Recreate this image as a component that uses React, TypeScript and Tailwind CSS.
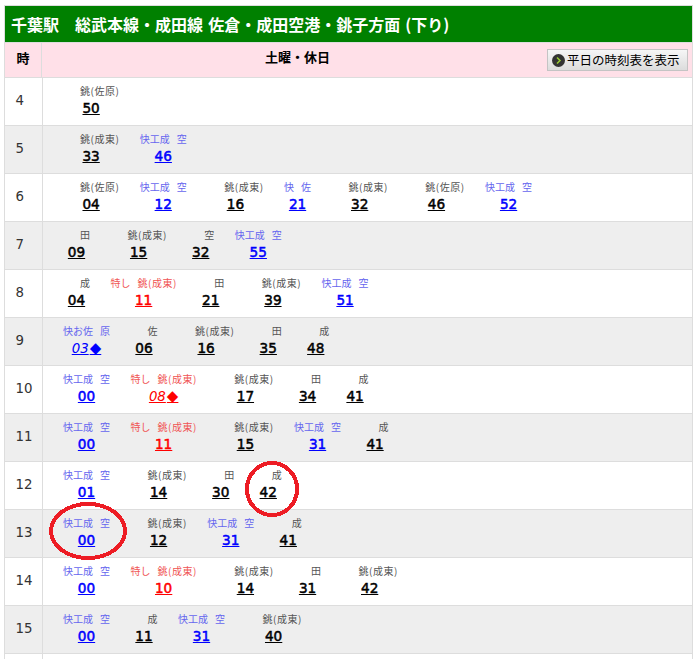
type Item = { t: string; m: string; k?: 'b' | 'r' | 'n'; d?: boolean };

const E = '銚(成東)';
const S = '銚(佐原)';
const K = '快工成|空';
const T = '特し|銚(成東)';

const rows: { h: number; items: Item[] }[] = [
  { h: 4, items: [{ t: S, m: '50' }] },
  { h: 5, items: [{ t: E, m: '33' }, { t: K, m: '46', k: 'b' }] },
  { h: 6, items: [{ t: S, m: '04' }, { t: K, m: '12', k: 'b' }, { t: E, m: '16' }, { t: '快|佐', m: '21', k: 'b' }, { t: E, m: '32' }, { t: S, m: '46' }, { t: K, m: '52', k: 'b' }] },
  { h: 7, items: [{ t: '田', m: '09' }, { t: E, m: '15' }, { t: '空', m: '32' }, { t: K, m: '55', k: 'b' }] },
  { h: 8, items: [{ t: '成', m: '04' }, { t: T, m: '11', k: 'r' }, { t: '田', m: '21' }, { t: E, m: '39' }, { t: K, m: '51', k: 'b' }] },
  { h: 9, items: [{ t: '快お佐|原', m: '03', k: 'b', d: true }, { t: '佐', m: '06' }, { t: E, m: '16' }, { t: '田', m: '35' }, { t: '成', m: '48' }] },
  { h: 10, items: [{ t: K, m: '00', k: 'b' }, { t: T, m: '08', k: 'r', d: true }, { t: E, m: '17' }, { t: '田', m: '34' }, { t: '成', m: '41' }] },
  { h: 11, items: [{ t: K, m: '00', k: 'b' }, { t: T, m: '11', k: 'r' }, { t: E, m: '15' }, { t: K, m: '31', k: 'b' }, { t: '成', m: '41' }] },
  { h: 12, items: [{ t: K, m: '01', k: 'b' }, { t: E, m: '14' }, { t: '田', m: '30' }, { t: '成', m: '42' }] },
  { h: 13, items: [{ t: K, m: '00', k: 'b' }, { t: E, m: '12' }, { t: K, m: '31', k: 'b' }, { t: '成', m: '41' }] },
  { h: 14, items: [{ t: K, m: '00', k: 'b' }, { t: T, m: '10', k: 'r' }, { t: E, m: '14' }, { t: '田', m: '31' }, { t: E, m: '42' }] },
  { h: 15, items: [{ t: K, m: '00', k: 'b' }, { t: '成', m: '11' }, { t: K, m: '31', k: 'b' }, { t: E, m: '40' }] },
];

const sans = "font-['Noto_Sans_CJK_JP','Liberation_Sans',sans-serif]";

function Entry({ it }: { it: Item }) {
  const color = it.k === 'b' ? 'text-[#0000ff]' : it.k === 'r' ? 'text-[#ff0000]' : 'text-black';
  const label = it.k === 'b' ? 'text-[#6666ee]' : it.k === 'r' ? 'text-[#f05555]' : 'text-[#555555] pl-[17px]';
  return (
    <div className="flex flex-col items-center">
      <span className={`flex gap-[7px] text-[10px] leading-[14px] whitespace-nowrap ${label}`}>
        {it.t.split('|').map((p) => (
          <span key={p} className={p.includes('(') ? 'tracking-[0.5px]' : ''}>
            {p}
          </span>
        ))}
      </span>
      {it.d ? (
        <span className={`mt-[2px] text-[13.33px] leading-[17px] italic underline font-['DejaVu_Sans',sans-serif] ${color}`}>
          {it.m}
          <span className="not-italic ml-[1px] text-[15px] leading-[17px]">◆</span>
        </span>
      ) : (
        <span className={`mt-[2px] text-[13.6px] leading-[17px] underline font-['DejaVu_Sans',sans-serif] [-webkit-text-stroke:0.5px] ${color}`}>{it.m}</span>
      )}
    </div>
  );
}

function Circle({ cls, rx, ry }: { cls: string; rx: number; ry: number }) {
  const w = rx * 2 + 4;
  const h = ry * 2 + 4;
  return (
    <svg className={`absolute ${cls}`} width={w} height={h} shapeRendering="crispEdges">
      <ellipse cx={w / 2} cy={h / 2} rx={rx} ry={ry} fill="none" stroke="#ed1c24" strokeWidth="4" />
    </svg>
  );
}

export default function App() {
  return (
    <div className={`relative h-[659px] overflow-hidden bg-white pl-1 pr-[4px] pt-[5px] ${sans}`}>
      <div className="border border-[#dddddd] border-b-0">
        <div className="h-[36px] bg-[#008000] pl-[6px] text-[16px] font-bold leading-[36px] text-white whitespace-pre">
          千葉駅　総武本線・成田線 <span className="ml-[1.5px]">佐倉・成田空港・銚子方面</span> <span className="ml-[1.5px]">(下り)</span>
        </div>
        <div className="flex h-[36px] border-t border-b border-[#dddddd] bg-[#ffe0e8]">
          <div className="flex w-[37px] shrink-0 items-center justify-center border-r border-[#dddddd] pb-[4px] text-[13px] font-bold text-black">時</div>
          <div className="relative flex-1 pr-[139px] pt-[5px] text-center text-[13px] font-bold leading-[18px] text-black">
            土曜・休日
            <div className="absolute right-[4px] top-[6px] flex h-[22px] w-[141px] items-center gap-[2px] border border-[#c4c4c4] bg-gradient-to-b from-[#f6f6f6] to-[#dcdcdc] pl-[4px] text-[12.5px] font-normal text-black">
              <svg width="13" height="13" viewBox="0 0 13 13">
                <circle cx="6.5" cy="6.5" r="6.5" fill="#333333" />
                <path d="M5 3.5 L8 6.5 L5 9.5" fill="none" stroke="#9acd32" strokeWidth="1.5" />
              </svg>
              平日の時刻表を表示
            </div>
          </div>
        </div>
        {rows.map((r, i) => (
          <div key={r.h} className={`flex h-[48px] border-b border-[#dddddd] ${i % 2 === 1 ? 'bg-[#eeeeee]' : 'bg-white'}`}>
            <div className="flex w-[38px] shrink-0 items-center border-r border-[#dddddd] pb-[2px] pl-[10.5px] font-['DejaVu_Sans',sans-serif] text-[13.33px] text-[#333333]">
              {r.h}
            </div>
            <div className="flex gap-[20.5px] pl-[20px] pt-[6px]">
              {r.items.map((it, j) => (
                <Entry key={j} it={it} />
              ))}
            </div>
          </div>
        ))}
        <div className="flex h-[48px]">
          <div className="w-[38px] border-r border-[#dddddd]" />
        </div>
      </div>
      <Circle cls="left-[245px] top-[461px]" rx={25} ry={26} />
      <Circle cls="left-[49px] top-[502px]" rx={37} ry={27} />
    </div>
  );
}
